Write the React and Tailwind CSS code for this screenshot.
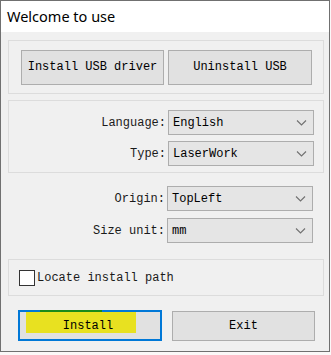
import React from "react";

const mono = { fontFamily: '"Liberation Mono", "DejaVu Sans Mono", monospace' };

function Chevron() {
  return (
    <svg width="11" height="7" viewBox="0 0 11 7" className="absolute right-[6px] top-1/2 -translate-y-1/2">
      <path d="M1 1 L5.5 5.5 L10 1" fill="none" stroke="#707070" strokeWidth="1.1" />
    </svg>
  );
}

function Row({ label, value, mt }) {
  return (
    <div className={`flex items-center h-[25px] ${mt}`}>
      <div className="w-[158px] text-right pr-[1px] text-[12px] text-[#1a1a1a]" style={mono}>
        {label}:
      </div>
      <div className="relative ml-[1px] w-[146px] h-[25px] bg-[#e5e5e5] border border-[#adadad] flex items-center pl-[4px] text-[12px] text-black" style={mono}>
        {value}
        <Chevron />
      </div>
    </div>
  );
}

export default function App() {
  return (
    <div className="w-[331px] h-[355px] bg-[#fbf8f8] relative">
      <div className="w-[330px] h-[352px] border border-[#707070] bg-[#f0f0f0] flex flex-col">
        <div
          className="h-[31px] bg-white flex items-center pl-[6px] text-[14.5px] text-black"
          style={{ fontFamily: '"Noto Sans", "Open Sans", sans-serif' }}
        >
          Welcome to use
        </div>
        <div className="ml-[7px] mr-[5px] flex flex-col">
          <div className="mt-[8px] h-[54px] border border-[#dcdcdc] flex items-center pl-[12px] gap-[4px]">
            <div className="w-[143px] h-[35px] bg-[#e1e1e1] border border-[#adadad] flex items-center justify-center text-[12px] text-black" style={mono}>
              Install USB driver
            </div>
            <div className="w-[144px] h-[35px] bg-[#e1e1e1] border border-[#adadad] flex items-center justify-center text-[12px] text-black" style={mono}>
              Uninstall USB
            </div>
          </div>
          <div className="mt-[6px] h-[73px] border border-[#dcdcdc] pt-[9px]">
            <Row label="Language" value="English" mt="" />
            <Row label="Type" value="LaserWork" mt="mt-[6px]" />
          </div>
          <div className="pt-[13px]">
            <Row label="Origin" value="TopLeft" mt="" />
            <Row label="Size unit" value="mm" mt="mt-[7px]" />
          </div>
          <div className="mt-[16px] h-[37px] border border-[#dcdcdc] flex items-center pl-[10px]">
            <div className="w-[16px] h-[16px] bg-white border border-[#333333]" />
            <div className="ml-[2px] text-[12px] text-[#1a1a1a]" style={mono}>
              Locate install path
            </div>
          </div>
          <div className="mt-[14px] flex items-center">
            <div className="relative ml-[10px] w-[144px] h-[31px] bg-[#e1e1e1] border-2 border-[#0078d7] flex items-center justify-center">
              <div className="absolute left-[6px] top-[0px] w-[110px] h-[21px] bg-[#e8e120]" />
              <div className="absolute left-[20px] top-[-2px] w-[62px] h-[2px] bg-[#1a8a1a]" />
              <span className="relative text-[12px] text-black -ml-[4px]" style={mono}>Install</span>
            </div>
            <div className="ml-[10px] w-[143px] h-[30px] bg-[#e1e1e1] border border-[#adadad] flex items-center justify-center text-[12px] text-black" style={mono}>
              Exit
            </div>
          </div>
        </div>
      </div>
    </div>
  );
}
